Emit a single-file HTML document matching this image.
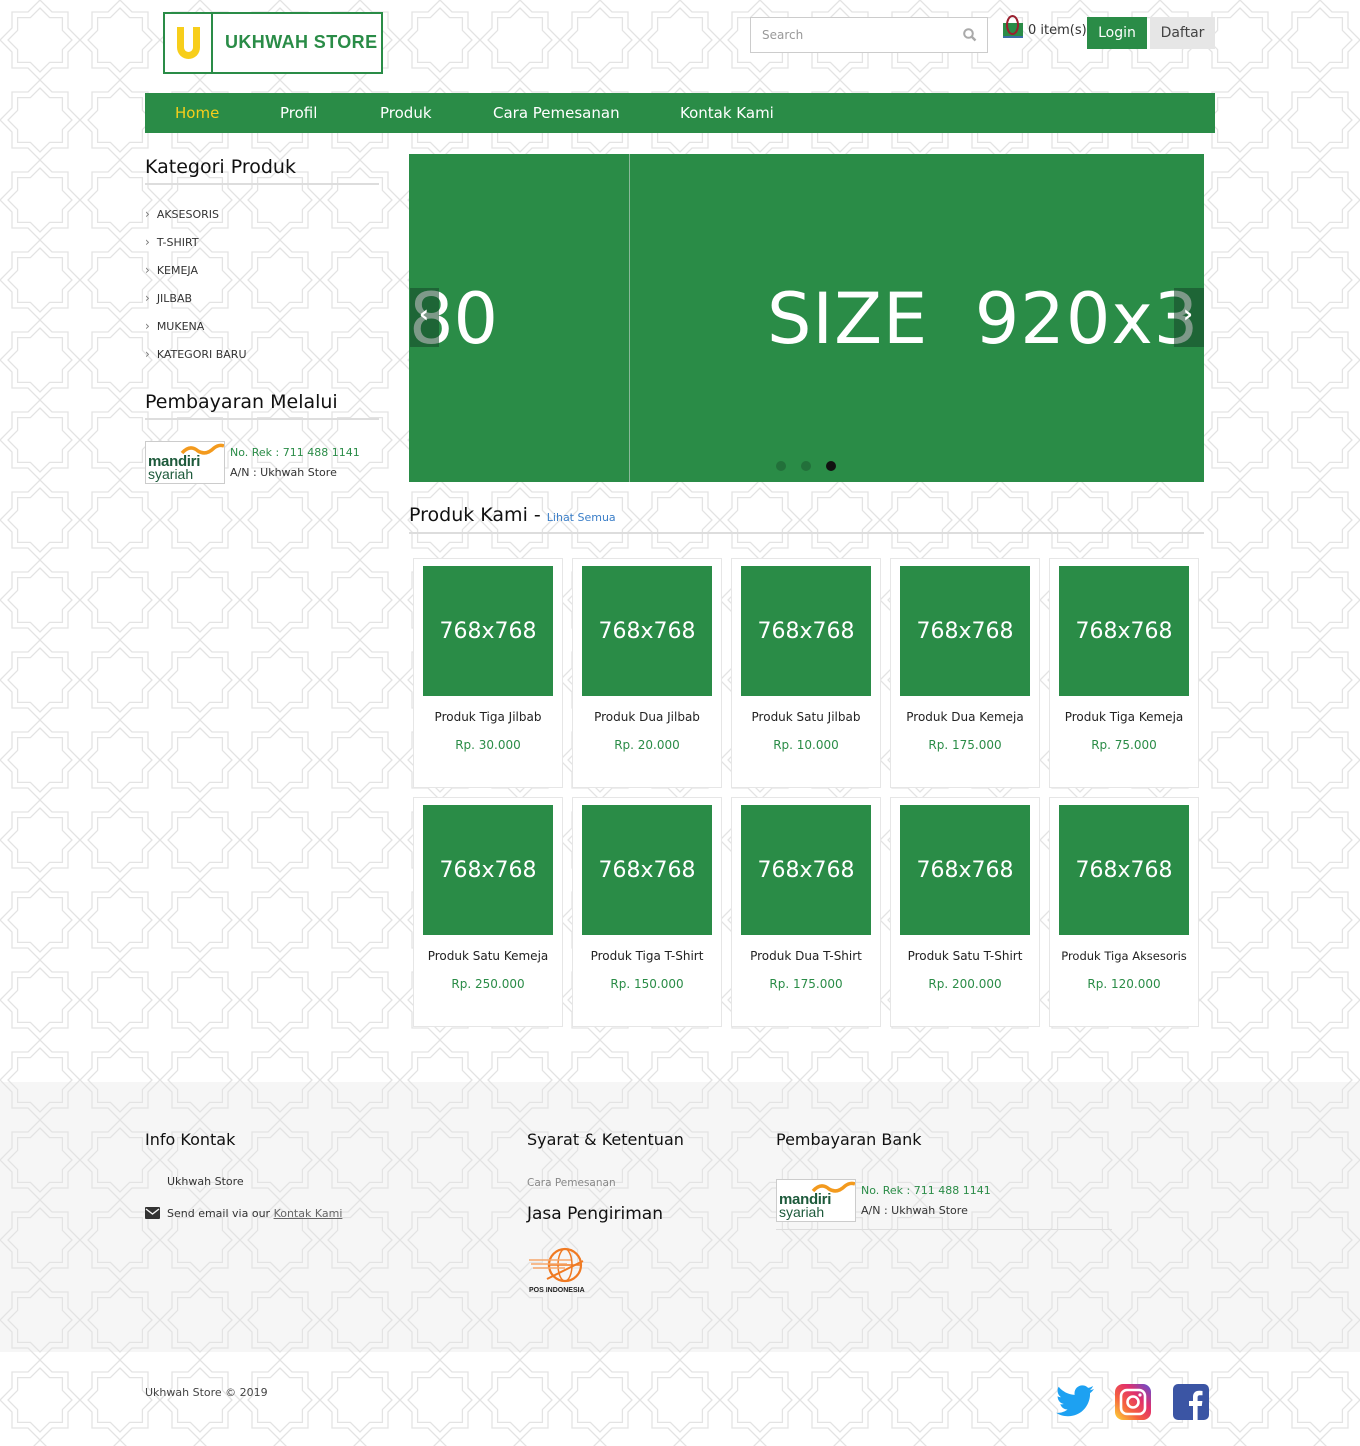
<!DOCTYPE html>
<html><head><meta charset="utf-8">
<style>
*{margin:0;padding:0;box-sizing:border-box}
body{width:1360px;height:1446px;position:relative;overflow:hidden;font-family:"DejaVu Sans","Liberation Sans",sans-serif;color:#222;background:#fff}
.a{position:absolute}
.pat{position:absolute;left:0;width:1360px}
.g{background:#2a8c47}
.nav span{position:absolute;top:11px;color:#fff;font-size:15px}
.cat{position:absolute;left:145px;font-size:11px;color:#333}
.cat:before{content:"›";color:#777;margin-right:7px;font-size:12px}
.card{position:absolute;width:150px;height:230px;background:#fff;border:1px solid #e6e6e6}
.card .img{position:absolute;left:9px;top:7px;width:130px;height:130px;background:#2a8c47;color:#fff;font-size:22px;text-align:center;line-height:132px}
.card .n{position:absolute;top:151px;left:0;width:148px;text-align:center;font-size:12px;color:#222;white-space:nowrap}
.card .p{position:absolute;top:179px;left:0;width:148px;text-align:center;font-size:12px;color:#2a8c47}
h3{position:absolute;font-weight:normal;font-size:19px;color:#111;white-space:nowrap}
.mand{position:absolute;width:80px;height:43px;border:1px solid #ccc;background:#fff;overflow:hidden}
.mand .m1{position:absolute;left:2px;top:11px;font-size:15px;color:#1d5a3b;font-family:'Liberation Sans',sans-serif;font-weight:bold;letter-spacing:-0.3px}
.mand .m2{position:absolute;left:2px;top:24px;font-size:14px;color:#1d5a3b;font-family:'Liberation Sans',sans-serif}
</style></head><body>
<svg class="pat" style="top:0;height:1446px" width="1360" height="1446">
<defs><pattern id="p" width="80" height="80" patternUnits="userSpaceOnUse" x="0" y="0">
<g transform="translate(40,40)" fill="none" stroke="#e3e3e3" stroke-width="1.3">
<polygon points="0,-40 12,-28 28,-28 28,-12 40,0 28,12 28,28 12,28 0,40 -12,28 -28,28 -28,12 -40,0 -28,-12 -28,-28 -12,-28"/>
<polygon points="0,-32 9.6,-22.4 22.4,-22.4 22.4,-9.6 32,0 22.4,9.6 22.4,22.4 9.6,22.4 0,32 -9.6,22.4 -22.4,22.4 -22.4,9.6 -32,0 -22.4,-9.6 -22.4,-22.4 -9.6,-22.4"/>
</g></pattern></defs>
<rect x="0" y="1082" width="1360" height="270" fill="#f6f6f6"/>
<rect width="1360" height="1446" fill="url(#p)"/>
</svg>

<div class="a" style="left:163px;top:12px;width:220px;height:62px;border:2px solid #2a8c47;background:#fff">
 <div class="a" style="left:46px;top:0;width:2px;height:58px;background:#2a8c47"></div>
 <div class="a" style="left:12px;top:13px;width:23px;height:32px;border:7px solid #f7ce1b;border-top:none;border-radius:0 0 12px 12px"></div>
 <div class="a" style="left:60px;top:18px;font-family:'Liberation Sans',sans-serif;font-weight:bold;font-size:18px;color:#2a8c47;white-space:nowrap;letter-spacing:0.4px">UKHWAH STORE</div>
</div>

<div class="a" style="left:750px;top:17px;width:238px;height:36px;border:1px solid #ccc;background:#fff">
 <span class="a" style="left:11px;top:10px;font-size:12px;color:#999">Search</span>
 <svg class="a" style="left:212px;top:10px" width="14" height="14"><circle cx="5.5" cy="5.5" r="4.3" fill="none" stroke="#aaa" stroke-width="2"/><line x1="8.5" y1="8.5" x2="12.5" y2="12.5" stroke="#aaa" stroke-width="2.4"/></svg>
</div>
<div class="a" style="left:1003px;top:23px;width:20px;height:15px;background:#2a8c47;border-bottom:2px solid #3a6ea5"></div>
<div class="a" style="left:1006px;top:15px;width:13px;height:20px;border:2px solid #9a1f2e;border-radius:50%"></div>
<span class="a" style="left:1028px;top:23px;font-size:13px;color:#333">0 item(s)</span>
<div class="a g" style="left:1087px;top:17px;width:60px;height:32px;color:#fff;font-size:14px;text-align:center;line-height:32px">Login</div>
<div class="a" style="left:1150px;top:17px;width:65px;height:32px;background:#e6e6e6;color:#444;font-size:14px;text-align:center;line-height:32px">Daftar</div>

<div class="a g nav" style="left:145px;top:93px;width:1070px;height:40px">
 <span style="left:30px;color:#f7ce1b">Home</span>
 <span style="left:135px">Profil</span>
 <span style="left:235px">Produk</span>
 <span style="left:348px">Cara Pemesanan</span>
 <span style="left:535px">Kontak Kami</span>
</div>

<h3 style="left:145px;top:156px">Kategori Produk</h3>
<div class="a" style="left:145px;top:183px;width:234px;height:2px;background:#ddd"></div>
<div class="cat" style="top:207px">AKSESORIS</div>
<div class="cat" style="top:235px">T-SHIRT</div>
<div class="cat" style="top:263px">KEMEJA</div>
<div class="cat" style="top:291px">JILBAB</div>
<div class="cat" style="top:319px">MUKENA</div>
<div class="cat" style="top:347px">KATEGORI BARU</div>
<h3 style="left:145px;top:391px">Pembayaran Melalui</h3>
<div class="a" style="left:145px;top:418px;width:234px;height:2px;background:#ddd"></div>

<div class="mand" style="left:145px;top:441px">
 <svg class="a" style="left:34px;top:1px" width="46" height="13"><path d="M2 10 Q10 1 18 8 Q26 13 34 5 Q39 1 44 3" fill="none" stroke="#f39a1e" stroke-width="3.5"/></svg>
 <span class="m1">mandiri</span><span class="m2">syariah</span>
</div>
<span class="a" style="left:230px;top:446px;font-size:11px;color:#2a8c47">No. Rek : 711 488 1141</span>
<span class="a" style="left:230px;top:466px;font-size:11px;color:#333">A/N : Ukhwah Store</span>

<div class="a g" style="left:409px;top:154px;width:795px;height:328px;overflow:hidden">
 <div class="a" style="left:220px;top:0;width:1px;height:328px;background:#8ab99a"></div>
 <span class="a" style="left:0;top:122px;color:#fff;font-size:70px;line-height:86px">80</span>
 <span class="a" style="left:358px;top:122px;color:#fff;font-size:70px;line-height:86px;white-space:nowrap;letter-spacing:1px">SIZE&nbsp;&nbsp;920x3</span>
 <div class="a" style="left:1px;top:134px;width:29px;height:59px;background:rgba(20,70,40,.55)"></div>
 <div class="a" style="left:765px;top:134px;width:30px;height:59px;background:rgba(20,70,40,.55)"></div>
 <span class="a" style="left:10px;top:146px;color:#fff;font-size:24px;font-weight:bold">‹</span>
 <span class="a" style="left:774px;top:146px;color:#fff;font-size:24px;font-weight:bold">›</span>
 <div class="a" style="left:367px;top:307px;width:10px;height:10px;border-radius:50%;background:#22703a"></div>
 <div class="a" style="left:392px;top:307px;width:10px;height:10px;border-radius:50%;background:#22703a"></div>
 <div class="a" style="left:417px;top:307px;width:10px;height:10px;border-radius:50%;background:#111"></div>
</div>

<h3 style="left:409px;top:504px">Produk Kami - <span style="font-size:11px;color:#3a7ec8">Lihat Semua</span></h3>
<div class="a" style="left:409px;top:532px;width:795px;height:2px;background:#ddd"></div>

<div class="card" style="left:413px;top:558px"><div class="img">768x768</div><div class="n">Produk Tiga Jilbab</div><div class="p">Rp. 30.000</div></div>
<div class="card" style="left:572px;top:558px"><div class="img">768x768</div><div class="n">Produk Dua Jilbab</div><div class="p">Rp. 20.000</div></div>
<div class="card" style="left:731px;top:558px"><div class="img">768x768</div><div class="n">Produk Satu Jilbab</div><div class="p">Rp. 10.000</div></div>
<div class="card" style="left:890px;top:558px"><div class="img">768x768</div><div class="n">Produk Dua Kemeja</div><div class="p">Rp. 175.000</div></div>
<div class="card" style="left:1049px;top:558px"><div class="img">768x768</div><div class="n">Produk Tiga Kemeja</div><div class="p">Rp. 75.000</div></div>
<div class="card" style="left:413px;top:797px"><div class="img">768x768</div><div class="n">Produk Satu Kemeja</div><div class="p">Rp. 250.000</div></div>
<div class="card" style="left:572px;top:797px"><div class="img">768x768</div><div class="n">Produk Tiga T-Shirt</div><div class="p">Rp. 150.000</div></div>
<div class="card" style="left:731px;top:797px"><div class="img">768x768</div><div class="n">Produk Dua T-Shirt</div><div class="p">Rp. 175.000</div></div>
<div class="card" style="left:890px;top:797px"><div class="img">768x768</div><div class="n">Produk Satu T-Shirt</div><div class="p">Rp. 200.000</div></div>
<div class="card" style="left:1049px;top:797px"><div class="img">768x768</div><div class="n" style="font-size:11.5px">Produk Tiga Aksesoris</div><div class="p">Rp. 120.000</div></div>

<h3 style="left:145px;top:1130px;font-size:16px">Info Kontak</h3>
<span class="a" style="left:167px;top:1175px;font-size:11px;color:#333">Ukhwah Store</span>
<svg class="a" style="left:145px;top:1207px" width="15" height="12"><rect width="15" height="12" rx="1" fill="#333"/><path d="M1 2 L7.5 7 L14 2" fill="none" stroke="#f6f6f6" stroke-width="1.4"/></svg>
<span class="a" style="left:167px;top:1207px;font-size:11px;color:#333">Send email via our <u style="color:#666">Kontak Kami</u></span>

<h3 style="left:527px;top:1130px;font-size:16px">Syarat &amp; Ketentuan</h3>
<span class="a" style="left:527px;top:1177px;font-size:10.5px;color:#888">Cara Pemesanan</span>
<h3 style="left:527px;top:1204px;font-size:17px">Jasa Pengiriman</h3>
<svg class="a" style="left:527px;top:1245px" width="70" height="50">
 <circle cx="38" cy="20" r="16" fill="none" stroke="#f07a22" stroke-width="2.2"/>
 <ellipse cx="38" cy="20" rx="7" ry="16" fill="none" stroke="#f07a22" stroke-width="1.5"/>
 <line x1="22" y1="20" x2="54" y2="20" stroke="#f07a22" stroke-width="1.5"/>
 <path d="M2 15 H44 M4 19 H40 M6 23 H38" stroke="#f5a66a" stroke-width="1.6"/>
 <path d="M20 34 L56 16" stroke="#f07a22" stroke-width="2"/>
 <text x="2" y="47" font-size="7" font-weight="bold" fill="#222" font-family="Liberation Sans,sans-serif">POS INDONESIA</text>
</svg>

<h3 style="left:776px;top:1130px;font-size:16px">Pembayaran Bank</h3>
<div class="mand" style="left:776px;top:1179px">
 <svg class="a" style="left:34px;top:1px" width="46" height="13"><path d="M2 10 Q10 1 18 8 Q26 13 34 5 Q39 1 44 3" fill="none" stroke="#f39a1e" stroke-width="3.5"/></svg>
 <span class="m1">mandiri</span><span class="m2">syariah</span>
</div>
<span class="a" style="left:861px;top:1184px;font-size:11px;color:#2a8c47">No. Rek : 711 488 1141</span>
<span class="a" style="left:861px;top:1204px;font-size:11px;color:#333">A/N : Ukhwah Store</span>
<div class="a" style="left:776px;top:1229px;width:336px;height:1px;background:#ddd"></div>

<span class="a" style="left:145px;top:1386px;font-size:11px;color:#444">Ukhwah Store © 2019</span>

<svg class="a" style="left:1056px;top:1385px" width="38" height="32" viewBox="0 0 24 20"><path fill="#1da1f2" d="M24 2.4c-.9.4-1.8.6-2.8.8 1-.6 1.8-1.6 2.2-2.7-1 .6-2 1-3.1 1.2C19.4.7 18.1.1 16.6.1c-2.7 0-4.9 2.2-4.9 4.9 0 .4 0 .8.1 1.1C7.7 5.900 4.1 4 1.7 1 1.2 1.7 1 2.6 1 3.5c0 1.7.9 3.2 2.2 4.1-.8 0-1.6-.2-2.2-.6v.1c0 2.4 1.7 4.4 3.9 4.8-.4.1-.8.2-1.3.2-.3 0-.6 0-.9-.1.6 2 2.400 3.4 4.6 3.4-1.7 1.3-3.8 2.1-6.1 2.1-.4 0-.8 0-1.2-.1 2.2 1.4 4.8 2.2 7.5 2.2 9.1 0 14-7.5 14-14v-.6c1-.7 1.8-1.6 2.5-2.6z"/></svg>
<svg class="a" style="left:1115px;top:1384px" width="36" height="36" viewBox="0 0 36 36">
 <defs><linearGradient id="ig" x1="0" y1="1" x2="1" y2="0"><stop offset="0" stop-color="#fdd835"/><stop offset=".35" stop-color="#f56040"/><stop offset=".65" stop-color="#e1306c"/><stop offset="1" stop-color="#5b51d8"/></linearGradient></defs>
 <rect width="36" height="36" rx="8" fill="url(#ig)"/>
 <rect x="6" y="6" width="24" height="24" rx="6" fill="none" stroke="#fff" stroke-width="2.6"/>
 <circle cx="18" cy="18" r="5.5" fill="none" stroke="#fff" stroke-width="2.6"/>
 <circle cx="25" cy="11" r="1.6" fill="#fff"/>
</svg>
<svg class="a" style="left:1173px;top:1384px" width="36" height="36" viewBox="0 0 36 36">
 <rect width="36" height="36" rx="5" fill="#3b55a4"/>
 <path fill="#fff" d="M20 36V22h-4v-5h4v-4c0-4 2.4-6.2 6-6.2 1.7 0 3 .1 3.5.2v4.2H27c-2 0-2.4 1-2.4 2.4V17h4.8l-.6 5h-4.2v14z"/>
</svg>
</body></html>
